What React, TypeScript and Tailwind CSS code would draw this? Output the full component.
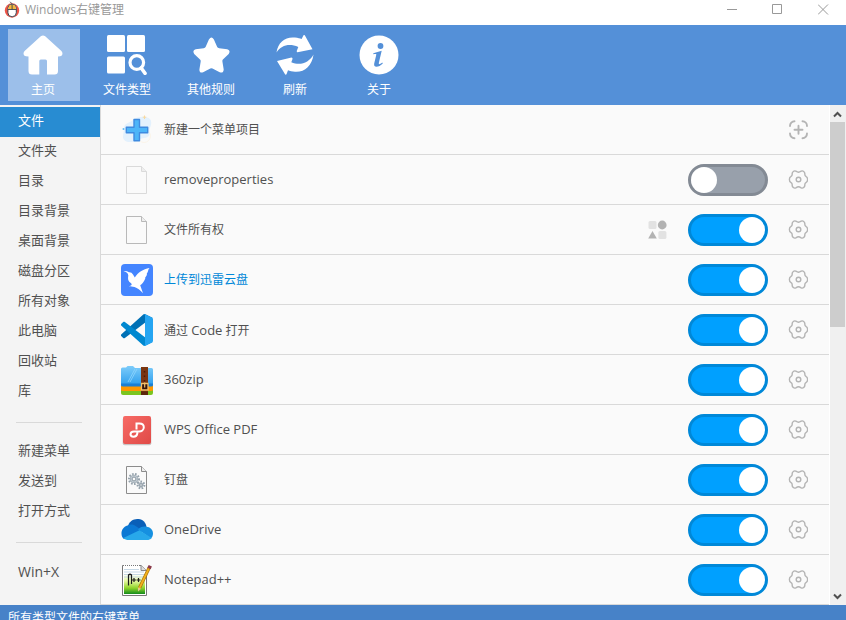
import { useState } from "react";
import type { ReactNode } from "react";

const FONT = "font-['Open_Sans','Noto_Sans_CJK_SC',sans-serif]";

/* ---------- title bar ---------- */

function AppLogo() {
  return (
    <svg viewBox="0 0 16 18" className="h-[18px] w-4" aria-hidden="true">
      <circle cx="8" cy="9.5" r="7.2" fill="#ee5548" />
      <path d="M8 3.5 C8 1.5 6.5 2 6 0.8" fill="none" stroke="#555" strokeWidth="1" />
      <rect x="3.9" y="3.3" width="8.4" height="12.400" rx="4" fill="#fff" stroke="#3c4450" strokeWidth="1" />
      <path d="M4.4 8.2 V7 C4.4 5 6 3.8 8 3.8 C10.300 3.800 11.800 5 11.800 7 V8.200 Z" fill="#f6b73c" />
      <path d="M4 8.500 H12.200 M8.100 3.500 V8.500" stroke="#3c4450" strokeWidth="0.900" />
    </svg>
  );
}

function TitleBar() {
  return (
    <header className="flex h-[25px] shrink-0 items-start justify-between bg-white pl-1">
      <div className="flex items-center gap-[5px]">
        <AppLogo />
        <h1 className="text-[12px] leading-5 text-[#999999]">Windows右键管理</h1>
      </div>
      <div className="flex">
        <button aria-label="最小化" className="flex h-[18px] w-[45px] items-center justify-center">
          <svg width="11" height="11" stroke="#999" aria-hidden="true"><path d="M0 5.500 H10" /></svg>
        </button>
        <button aria-label="最大化" className="flex h-[18px] w-[45px] items-center justify-center">
          <svg width="11" height="11" fill="none" stroke="#999" aria-hidden="true"><path d="M0.500 0.500 H9.500 V9.500 H0.500 Z" /></svg>
        </button>
        <button aria-label="关闭" className="flex h-[18px] w-[46px] items-center justify-center">
          <svg width="11" height="11" stroke="#999" aria-hidden="true"><path d="M0 0.500 L10 10.500 M10 0.500 L0 10.500" /></svg>
        </button>
      </div>
    </header>
  );
}

/* ---------- toolbar ---------- */

const toolbarItems: { label: string; icon: ReactNode }[] = [
  {
    label: "主页",
    icon: (
      <path d="M17.800 1.200 Q20 -0.400 22.200 1.200 L38.400 16 Q40.500 18.500 38.500 20.800 Q37.500 21.500 35 21.500 V36 Q35 39.500 31.500 39.500 H24 V26 Q24 24.500 22.500 24.500 H17.800 Q16.300 24.500 16.300 26 V39.500 H9 Q5.500 39.500 5.500 36 V21.500 Q2.500 21.500 1.500 20.800 Q-0.500 18.500 1.600 16 Z" />
    ),
  },
  {
    label: "文件类型",
    icon: (
      <>
        <rect x="0" y="0" width="18" height="17" rx="1.500" />
        <rect x="20" y="0" width="18" height="17" rx="1.500" />
        <rect x="0" y="21.500" width="18" height="17" rx="1.500" />
        <circle cx="29.800" cy="27.500" r="6.800" fill="none" stroke="#fff" strokeWidth="3.200" />
        <path d="M34.200 33 L38 38.300" stroke="#fff" strokeWidth="3.600" strokeLinecap="round" />
      </>
    ),
  },
  {
    label: "其他规则",
    icon: (
      <path transform="translate(-0.300 0)" d="M18.200 4.500 Q20.700 0.500 23.200 4.500 L26.500 12 Q27 13 28.500 13.200 L36.500 14.300 Q40.300 15.500 38 19 L32.200 24.500 Q31.500 25.200 31.700 26.500 L33 34.500 Q32.800 38.500 29 37.300 L21.800 33.600 Q20.700 33 19.600 33.600 L12.400 37.300 Q8.600 38.500 8.700 34.500 L10 26.500 Q10.200 25.200 9.300 24.500 L3.500 19 Q1.300 15.500 5 14.300 L13 13.200 Q14.300 13 14.900 12 Z" />
    ),
  },
  {
    label: "刷新",
    icon: (
      <>
        <path d="M1.500 17.500 C3 7 10.500 1.500 20 2.600 C23 2.900 25 3.500 26.600 4 L28.500 0.200 Q29 -0.200 29.800 0.200 L37.500 14.200 L22.500 17.300 Q21.500 17 21.800 15.800 L23.300 12 C14 8 6 10.500 1.500 17.500 Z" />
        <path d="M38.500 19.500 C37 31 29.500 37.500 20 36.800 C17.500 36.600 14.500 36 13 35.300 L11.500 39.300 Q11 40 10.200 39.600 L2 26 L16.500 22.500 Q17.800 22.700 17.500 24 L16.300 27.200 C25 31 34 28 38.500 19.500 Z" />
      </>
    ),
  },
  {
    label: "关于",
    icon: (
      <>
        <circle cx="20" cy="20" r="19.500" />
        <circle cx="21.500" cy="11" r="2.900" fill="#5490d8" />
        <path d="M14.300 18.200 L22.700 15.800 L19.800 28.100 C19.500 29.500 20.500 29.700 23.300 27.600 L23.800 28.500 C20.300 32.200 14.200 33.500 15.200 28.500 L17.300 19.800 C17.500 18.800 16.800 18.800 14.300 19.200 Z" fill="#5490d8" />
      </>
    ),
  },
];

function Toolbar() {
  const [active, setActive] = useState("主页");
  return (
    <nav className="flex h-20 shrink-0 gap-3 bg-[#5490d8] px-2 py-1">
      {toolbarItems.map((item) => (
        <button
          key={item.label}
          onClick={() => setActive(item.label)}
          className={`flex w-[72px] flex-col items-center pt-[6px] pr-[2px] text-white ${
            active === item.label ? "bg-[#9cbfea]" : ""
          }`}
        >
          <svg viewBox="0 0 40 40" className="size-10" fill="#fff" aria-hidden="true">
            {item.icon}
          </svg>
          <span className="mt-[5px] text-[12px] leading-5">{item.label}</span>
        </button>
      ))}
    </nav>
  );
}

/* ---------- sidebar ---------- */

const groups = [
  ["文件", "文件夹", "目录", "目录背景", "桌面背景", "磁盘分区", "所有对象", "此电脑", "回收站", "库"],
  ["新建菜单", "发送到", "打开方式"],
  ["Win+X"],
];

function Sidebar() {
  const [active, setActive] = useState("文件");
  return (
    <aside className="w-[101px] shrink-0 border-r border-[#d9d9d9] bg-[#f4f4f4] pt-[2px]">
      {groups.map((group, g) => (
        <div key={g}>
          {g > 0 && (
            <div className="flex h-[30px] items-center pr-[18px] pl-4">
              <hr className="w-full border-[#d9d9d9]" />
            </div>
          )}
          {group.map((label) => (
            <button
              key={label}
              onClick={() => setActive(label)}
              className={`flex h-[30px] w-full items-center pl-[18px] leading-5 ${
                label === "Win+X" ? "text-[14px]" : "pb-1 text-[13px]"
              } ${active === label ? "bg-[#288cd2] text-white" : "text-[#505050]"}`}
            >
              {label}
            </button>
          ))}
        </div>
      ))}
    </aside>
  );
}

/* ---------- list icons, all on a 32 x 32 grid ---------- */

function Page({ stroke }: { stroke: string }) {
  return (
    <>
      <path d="M5.500 2.500 H20.500 L25.500 7.500 V29.500 H5.500 Z" fill="#fafafa" stroke={stroke} />
      <path d="M20.500 2.500 V7.500 H25.500" fill="#eee" stroke={stroke} />
    </>
  );
}

function Cog({ x, y, r }: { x: number; y: number; r: number }) {
  return (
    <g>
      <circle cx={x} cy={y} r={r} fill="none" stroke="#94a1ab" strokeWidth="2" strokeDasharray="1.600 1.400" />
      <circle cx={x} cy={y} r={r - 1.200} fill="#c6cfd6" stroke="#98a5af" strokeWidth="0.800" />
      <circle cx={x} cy={y} r={r / 2.600} fill="#fafafa" stroke="#7f8d98" strokeWidth="0.900" />
    </g>
  );
}

const icons = {
  add: (
    <>
      <path d="M3 15 C3 8 8 10 12 6 C18 1 29 2 30 7 C31 12 28 13 28.500 19 C29 25 22 23 17 26 C10 30 1 28 2 22 Z" fill="#e3f1fd" />
      <circle cx="23" cy="22" r="6.500" fill="none" stroke="#fbf1e2" strokeWidth="0.700" />
      <path d="M23.500 1.500 V5 M21.700 3.200 H25.300" stroke="#f8d9a0" />
      <circle cx="2.500" cy="15" r="1" fill="#64bdf2" />
      <path d="M13 5.500 H18.500 V13.300 H26.700 V18.700 H18.500 V26.700 H13 V18.700 H5.300 V13.300 H13 Z" fill="#4db5f8" stroke="#3f8be0" strokeWidth="1.400" strokeLinejoin="round" />
    </>
  ),
  pageLight: <Page stroke="#dadada" />,
  page: <Page stroke="#b9b9b9" />,
  xunlei: (
    <>
      <rect width="32" height="32" rx="4" fill="#4485ff" />
      <path d="M2.500 7.300 Q5 6.500 8 8.300 Q10.500 8 12 10.500 L13.800 13.600 C17 8.500 22 5 28.500 4 C26.500 6 27.500 8 25.800 9.500 C26.500 12 23.500 13 24.300 14.500 C23 18 21 20 19.200 21.200 L22 29.300 C19 26 16.500 24 13.500 23 C11.500 22.300 9.500 22.500 8 22.200 C11 21.500 11.500 20.500 9.500 18.800 C6.500 16.500 7 14 7.300 11.500 C7 9 5.500 8 2.500 7.300 Z" fill="#fff" />
    </>
  ),
  vscode: (
    <g transform="scale(0.32)">
      <path fill="#0070b5" d="M96.460 10.800 L75.860 0.880 C73.470 -0.270 70.620 0.210 68.750 2.080 L1.300 63.580 C-0.520 65.240 -0.510 68.090 1.300 69.750 L6.810 74.750 C8.300 76.100 10.530 76.200 12.130 74.990 L93.360 13.370 C96.090 11.300 100 13.250 100 16.670 V16.430 C100 14.030 98.620 11.840 96.460 10.800 Z" />
      <path fill="#0088d0" d="M96.460 89.200 L75.860 99.120 C73.470 100.270 70.620 99.790 68.750 97.920 L1.300 36.420 C-0.520 34.760 -0.510 31.910 1.300 30.250 L6.810 25.250 C8.300 23.900 10.530 23.800 12.130 25.010 L93.360 86.630 C96.090 88.700 100 86.750 100 83.330 V83.570 C100 85.970 98.620 88.160 96.460 89.200 Z" />
      <path fill="#25a5f2" d="M75.860 99.130 C73.470 100.270 70.620 99.790 68.750 97.920 C71.060 100.220 75 98.590 75 95.330 V4.670 C75 1.410 71.060 -0.220 68.750 2.080 C70.620 0.210 73.470 -0.270 75.860 0.870 L96.460 10.780 C98.620 11.820 100 14.010 100 16.410 V83.590 C100 85.990 98.620 88.180 96.460 89.220 Z" />
    </g>
  ),
  zip: (
    <>
      <defs>
        <linearGradient id="zipBlue" x1="0" y1="0" x2="0" y2="1">
          <stop offset="0" stopColor="#7dccfa" />
          <stop offset="1" stopColor="#2a9cec" />
        </linearGradient>
      </defs>
      <path d="M0 23 H32 V29 Q32 31 30 31 H2 Q0 31 0 29 Z" fill="#7bc51f" />
      <path d="M0 19 H32 V26 Q32 27 30 27 H2 Q0 27 0 26 Z" fill="#ff9800" />
      <path d="M0 5 Q0 3.500 1.500 3.500 H5 L6.500 2 H12 L14 4 H30.500 Q32 4 32 5.500 V21 Q32 22 30 22 H2 Q0 22 0 21 Z" fill="url(#zipBlue)" />
      <path d="M0 19.500 H32 V21 Q32 22.500 30 22.500 H2 Q0 22.500 0 21 Z" fill="#1a7fd4" />
      <path d="M14 5 L7 18 M16 5 L9 18" stroke="#8fd6fc" strokeWidth="0.800" />
      <rect x="20" y="3" width="7" height="28" fill="#7a3510" />
      <path d="M23.500 7 V19" stroke="#4b1c05" strokeWidth="1.500" strokeDasharray="1.500 3" />
      <path d="M20.500 19.500 H27 V26 H20.500 Z" fill="#33140a" stroke="#f3c06a" strokeWidth="1.300" />
      <path d="M23.700 18.500 V23.500" stroke="#f3c06a" strokeWidth="1.200" />
      <path d="M20 27.500 H27 V31 H20 Z" fill="#5c270b" />
    </>
  ),
  wps: (
    <>
      <defs>
        <linearGradient id="wpsRed" x1="0" y1="0" x2="1" y2="1">
          <stop offset="0" stopColor="#f76b66" />
          <stop offset="1" stopColor="#e04a47" />
        </linearGradient>
      </defs>
      <rect x="1.700" y="3.500" width="28.600" height="27.700" rx="2" fill="#c9c5c5" />
      <rect x="2" y="2" width="28" height="28" rx="2" fill="url(#wpsRed)" />
      <path d="M15.500 14.500 V9.500 H18.500 C21.500 9.500 22.800 11 22.800 13.300 C22.800 16 20.500 17.500 18 17.500 H13 C10.500 17.500 9.500 18.500 9.500 20.300 C9.500 22 11 22.700 12.500 22.700 C15 22.700 16 21.500 16.300 19.500" fill="none" stroke="#fff" strokeWidth="2" strokeLinecap="square" />
    </>
  ),
  ding: (
    <>
      <Page stroke="#8c8c8c" />
      <Cog x={13} y={15} r={5} />
      <Cog x={20} y={21} r={3.400} />
    </>
  ),
  onedrive: (
    <>
      <path d="M7 12 C9 5.500 14 5 17.500 5 C22 5 25 9 25.500 13 L17 19 Z" fill="#0a5fb8" />
      <path d="M6.500 11.500 C9 9.800 13 10.500 15 12.300 L22 17 L12 22 L3 25 C-1 22 -0.500 13.500 6.500 11.500 Z" fill="#0b78d4" />
      <path d="M17 15.500 C20 12.500 23 12.300 25.500 12.800 C29 13 32 15.500 32 19.500 C32 21.500 31 23.500 30 24.500 Z" fill="#1690e0" />
      <path d="M2.300 24 L18.500 16.300 L30.600 24 C29.500 25.500 28 26 26 26 H8 C5.500 26 3.500 25.400 2.300 24 Z" fill="#28a8ea" />
    </>
  ),
  notepad: (
    <>
      <defs>
        <linearGradient id="noteGreen" x1="0" y1="0" x2="0" y2="1">
          <stop offset="0" stopColor="#ffffff" />
          <stop offset="0.350" stopColor="#e6f9a0" />
          <stop offset="0.700" stopColor="#8fd52a" />
          <stop offset="1" stopColor="#128a1c" />
        </linearGradient>
      </defs>
      <path d="M1.500 1.500 H20 L25.500 6.500 V31.500 H1.500 Z" fill="#fff" stroke="#777" />
      <path d="M3 1.500 H19" stroke="#fff" strokeWidth="1.500" strokeDasharray="1 1" />
      <rect x="3" y="10" width="21" height="20" fill="url(#noteGreen)" />
      <path d="M3 5.500 H18 M3 8 H23 M3 10.500 H23 M3 13 H23" stroke="#b9cfe0" strokeWidth="0.800" />
      <path d="M20 1.500 V6.500 H25.500" fill="#ddd" stroke="#888" />
      <path d="M7.500 21.500 V11 Q9 9.500 10.500 11 V20 M11 16 H15 M13 14 V18 M15.500 16 H19.500 M17.500 14 V18" fill="none" stroke="#1c1c1c" strokeWidth="1.200" />
      <path d="M28.300 3.500 L18.500 24" stroke="#a8700c" strokeWidth="3.200" />
      <path d="M28.300 3.500 L18.500 24" stroke="#f2b21c" strokeWidth="1.800" />
      <path d="M16.900 23.300 L20.100 24.800 L17 27.500 Z" fill="#e8c48c" />
      <path d="M28 4.500 L29.300 1.800" stroke="#8b3a4c" strokeWidth="3.600" />
    </>
  ),
};

function GearIcon() {
  return (
    <svg viewBox="0 0 20 20" className="size-5" fill="none" stroke="#b4b4b4" strokeWidth="1.400" strokeLinejoin="round" aria-hidden="true">
      <path d="M5.300 1.500 Q6.500 0.500 7.800 1.200 Q9.500 2.200 10.500 2.200 Q11.500 2.200 13.200 1.200 Q14.500 0.500 15.700 1.500 Q17 2.500 16.800 4 Q16.700 5.700 18.200 6.600 Q19.600 7.300 19.600 9.500 Q19.600 11.700 18.200 12.400 Q16.700 13.300 16.800 15 Q17 16.500 15.700 17.500 Q14.500 18.500 13.200 17.800 Q11.500 16.800 10.500 16.800 Q9.500 16.800 7.800 17.800 Q6.500 18.500 5.300 17.500 Q4 16.500 4.200 15 Q4.300 13.300 2.800 12.400 Q1.400 11.700 1.400 9.500 Q1.400 7.300 2.800 6.600 Q4.300 5.700 4.200 4 Q4 2.500 5.300 1.500 Z" />
      <circle cx="10.500" cy="9.500" r="2.300" />
    </svg>
  );
}

function AddFrameIcon() {
  return (
    <svg viewBox="0 0 20 20" className="size-5" fill="none" stroke="#b4b4b4" strokeWidth="1.900" strokeLinecap="round" aria-hidden="true">
      <path d="M2 6 C2 3.500 4 1.300 6.500 1.300 M14.500 1.300 C17 1.300 19 3.500 19 6 M19 13.500 C19 16 17 18.300 14.500 18.300 M6.500 18.300 C4 18.300 2 16 2 13.500" />
      <path d="M10.500 5.800 V13.800 M6.500 9.800 H14.500" />
    </svg>
  );
}

function ShapesIcon() {
  return (
    <svg viewBox="0 0 20 20" className="size-5" aria-hidden="true">
      <rect x="0.500" y="1" width="8" height="8" rx="1.500" fill="#e2e2e2" />
      <circle cx="14.200" cy="5" r="4.400" fill="#b2b2b2" />
      <path d="M4.500 11 L8.800 18.500 H0.200 Z" fill="#b2b2b2" />
      <rect x="10.400" y="11" width="8" height="8" rx="1.500" fill="#e2e2e2" />
    </svg>
  );
}

/* ---------- list ---------- */

type Entry = {
  id: string;
  icon: keyof typeof icons;
  name: ReactNode;
  latin?: boolean;
  on: boolean;
  shapes?: boolean;
  link?: boolean;
};

const entries: Entry[] = [
  { id: "remove", icon: "pageLight", name: "removeproperties", latin: true, on: false },
  { id: "owner", icon: "page", name: "文件所有权", on: true, shapes: true },
  { id: "xunlei", icon: "xunlei", name: "上传到迅雷云盘", on: true, link: true },
  { id: "code", icon: "vscode", name: <>通过 <span className="text-[13px]">Code</span> 打开</>, on: true },
  { id: "zip", icon: "zip", name: "360zip", latin: true, on: true },
  { id: "wps", icon: "wps", name: "WPS Office PDF", latin: true, on: true },
  { id: "ding", icon: "ding", name: "钉盘", on: true },
  { id: "onedrive", icon: "onedrive", name: "OneDrive", latin: true, on: true },
  { id: "notepad", icon: "notepad", name: "Notepad++", latin: true, on: true },
];

const ROW = "flex h-[50px] items-center border-b border-[#d9d9d9] pt-px pr-[21px] pl-5";

function ListIcon({ name }: { name: keyof typeof icons }) {
  return (
    <svg viewBox="0 0 32 32" className="size-8 shrink-0" aria-hidden="true">
      {icons[name]}
    </svg>
  );
}

function EntryRow({ entry }: { entry: Entry }) {
  return (
    <li className={ROW}>
      <ListIcon name={entry.icon} />
      <label
        htmlFor={entry.id}
        className={`ml-[11px] flex-1 leading-5 ${entry.latin ? "pb-[2px] text-[13px]" : "text-[12px]"} ${
          entry.link ? "text-[#0088d8]" : "text-[#505050]"
        }`}
      >
        {entry.name}
      </label>
      {entry.shapes && (
        <button aria-label="分组" className="mr-5">
          <ShapesIcon />
        </button>
      )}
      <input
        id={entry.id}
        type="checkbox"
        role="switch"
        defaultChecked={entry.on}
        className="h-8 w-20 shrink-0 appearance-none rounded-full border-3 border-[#838a94] bg-[#98a0ab] before:block before:size-[26px] before:rounded-full before:bg-white checked:border-[#0088d8] checked:bg-[#00a0ff] checked:before:ml-auto"
      />
      <button aria-label="设置" className="ml-5">
        <GearIcon />
      </button>
    </li>
  );
}

function ScrollBar() {
  return (
    <div className="ml-px flex w-4 shrink-0 flex-col bg-[#f0f0f0]">
      <button aria-label="向上滚动" className="flex h-[17px] items-center justify-center pt-px pr-px">
        <svg width="9" height="7" fill="none" stroke="#505050" strokeWidth="2" aria-hidden="true"><path d="M1 5.500 L4.500 2 L8 5.500" /></svg>
      </button>
      <div className="flex-1 pr-px">
        <div className="h-[44%] min-h-8 bg-[#cdcdcd]" />
      </div>
      <button aria-label="向下滚动" className="flex h-[17px] items-center justify-center pr-px">
        <svg width="9" height="7" fill="none" stroke="#505050" strokeWidth="2" aria-hidden="true"><path d="M1 1.500 L4.500 5 L8 1.500" /></svg>
      </button>
    </div>
  );
}

export default function App() {
  return (
    <div className={`flex h-screen flex-col overflow-hidden bg-white ${FONT}`}>
      <TitleBar />
      <Toolbar />
      <main className="flex shrink-0">
        <Sidebar />
        <ul className="min-w-0 flex-1 bg-[#fafafa]">
          <li className={ROW}>
            <ListIcon name="add" />
            <span className="ml-[11px] flex-1 text-[12px] leading-5 text-[#505050]">新建一个菜单项目</span>
            <button aria-label="新建">
              <AddFrameIcon />
            </button>
          </li>
          {entries.map((entry) => (
            <EntryRow key={entry.id} entry={entry} />
          ))}
        </ul>
        <ScrollBar />
      </main>
      <footer className="flex h-[26px] shrink-0 items-center bg-[#4782c8] px-2 text-[12px] leading-5 text-white">
        所有类型文件的右键菜单
      </footer>
    </div>
  );
}
